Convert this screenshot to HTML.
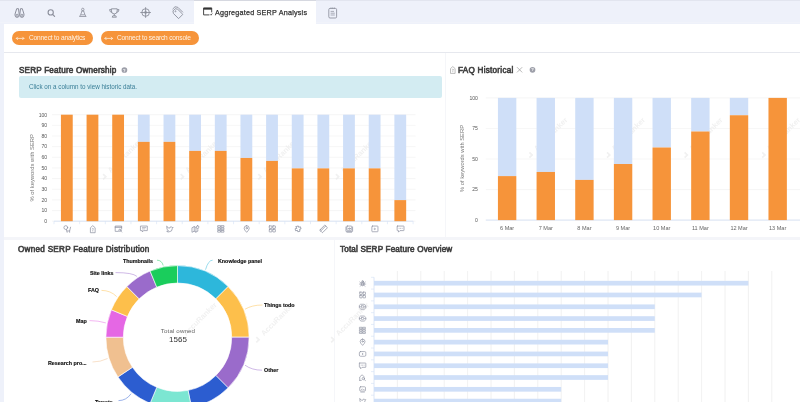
<!DOCTYPE html>
<html><head><meta charset="utf-8"><title>Aggregated SERP Analysis</title>
<style>
html,body{margin:0;padding:0;}
body{width:800px;height:402px;overflow:hidden;background:#eef1fa;font-family:"Liberation Sans",sans-serif;position:relative;}
.abs{position:absolute;white-space:nowrap;line-height:1;will-change:transform;}
#panel{position:absolute;left:4px;top:23.5px;width:796px;height:379px;background:#fff;}
#tab{position:absolute;left:193.6px;top:0px;width:122.6px;height:24px;background:#fff;border-top:1px solid #d6d8e0;box-sizing:border-box;}
.btn{position:absolute;top:31.1px;height:13.7px;border-radius:7px;background:#f6943a;}
.h{font-weight:normal;color:#424242;font-size:8.15px;-webkit-text-stroke:0.6px #424242;}
svg{position:absolute;left:0;top:0;}
.dl{font-size:5.35px;font-weight:bold;color:#111;-webkit-text-stroke:0.15px #111;margin-top:0.4px;}
</style></head><body>
<div style="position:absolute;left:0;top:0;width:800px;height:1px;background:#e2e5ef"></div>
<div style="position:absolute;left:0;top:22.4px;width:800px;height:1.1px;background:#f1f3fa"></div>
<div id="panel"></div>
<div id="tab"></div>
<div style="position:absolute;left:4px;top:52px;width:796px;height:1px;background:#e6e8ee"></div>
<div style="position:absolute;left:4px;top:237px;width:796px;height:2.6px;background:#f4f5f9"></div>
<div style="position:absolute;left:444.6px;top:53px;width:1px;height:184px;background:#f5f6f9"></div>
<div style="position:absolute;left:334.4px;top:240px;width:1px;height:162px;background:#f5f6f9"></div>

<div class="abs" id="tabtxt" style="left:214.6px;top:9.4px;font-size:7.2px;letter-spacing:0.22px;color:#333;-webkit-text-stroke:0.25px #333;">Aggregated SERP Analysis</div>
<div class="btn" style="left:11.9px;width:81.2px;"></div>
<div class="btn" style="left:100.5px;width:98.1px;"></div>
<div class="abs" id="b1" style="left:28.8px;top:35.4px;font-size:6.6px;letter-spacing:-0.16px;color:#fff3e6;">Connect to analytics</div>
<div class="abs" id="b2" style="left:117px;top:35.4px;font-size:6.6px;letter-spacing:-0.176px;color:#fff3e6;">Connect to search console</div>
<div class="abs h" id="h1" style="left:18.7px;top:66.9px;font-size:8.15px;letter-spacing:0.19px">SERP Feature Ownership</div>
<div class="abs h" id="h2" style="left:458px;top:66.9px;font-size:8.15px;letter-spacing:0.26px">FAQ Historical</div>
<div class="abs h" id="h3" style="left:18.4px;top:246.1px;font-size:8.15px;letter-spacing:0.275px">Owned SERP Feature Distribution</div>
<div class="abs h" id="h4" style="left:339.6px;top:246.0px;font-size:8.15px;letter-spacing:0.17px">Total SERP Feature Overview</div>
<div style="position:absolute;left:18.5px;top:76.3px;width:423px;height:21.4px;background:#d3ecf2;border-radius:2px"></div>
<div class="abs" id="info" style="left:28.7px;top:84.1px;font-size:6.28px;color:#3a7f97;">Click on a column to view historic data.</div>
<svg width="800" height="402" viewBox="0 0 800 402">
<g fill="none" stroke="#8b8e9b" stroke-width="1" stroke-linejoin="round"><path d="M16.7 8.7 H18.5 L19.15 14 V15.3 A2.05 2.05 0 0 1 15.05 15.3 V14 Z"/><path d="M22.3 8.7 H20.5 L19.85 14 V15.3 A2.05 2.05 0 0 0 23.95 15.3 V14 Z"/><circle cx="17.1" cy="15.3" r="1.05" stroke-width="0.9"/><circle cx="21.9" cy="15.3" r="1.05" stroke-width="0.9"/></g>
<g fill="none" stroke="#8b8e9b" stroke-width="1.1"><circle cx="50.7" cy="12.4" r="2.6"/><path d="M52.6 14.4 L54.6 16.4" stroke-linecap="round"/></g>
<g fill="none" stroke="#8b8e9b" stroke-width="0.8" stroke-linejoin="round"><circle cx="82.8" cy="9.4" r="1.2"/><path d="M81.4 11 h2.8 M82 11 L80.6 14.8 h4.4 L83.6 11 M79.6 16.4 L80.6 14.8 M86 16.4 L85 14.8 M79.4 16.5 h6.8"/></g>
<g fill="none" stroke="#8b8e9b" stroke-width="0.9" stroke-linejoin="round"><path d="M111.4 8.8 h5.8 v2.2 a2.9 2.9 0 0 1 -5.8 0 Z"/><path d="M111.4 9.6 h-1.8 q0 2.6 2.4 2.8 M117.2 9.6 h1.8 q0 2.6 -2.4 2.8 M114.3 14 v2 M112.2 17.2 l0.6 -1.4 h3 l0.6 1.4 Z"/></g>
<g fill="none" stroke="#8b8e9b" stroke-width="0.9"><circle cx="145.6" cy="12.5" r="3.8"/><path d="M145.6 7.2 V17.8 M140.3 12.5 H150.9"/><circle cx="145.6" cy="12.5" r="1.4" fill="#8b8e9b" stroke="none" opacity="0.8"/></g>
<g fill="none" stroke="#8b8e9b" stroke-width="0.85" stroke-linejoin="round" transform="translate(177.3,13.1) rotate(-45)"><path d="M-1.6 -4.6 L1.6 -4.6 L3 -2.4 V4.8 H-3 V-2.4 Z" transform="rotate(0)"/><path d="M-0.6 -6.1 L2.9 -6.1 L4.5 -3.6 V3.4" /><circle cx="0" cy="-2.6" r="0.5"/></g>
<g fill="none" stroke="#333" stroke-width="0.9" stroke-linejoin="round"><path d="M209.4 14.9 H203.6 V7.9 H211.7 V12.4"/><path d="M203.6 8.8 H211.7" stroke-width="1.7"/><path d="M210.2 14.3 l0.8 0.9 l1.3 -1.7" stroke-width="0.8"/></g>
<g fill="none" stroke="#8b8e9b" stroke-width="0.85"><rect x="328.8" y="8.4" width="7.8" height="9.6" rx="1.2"/><path d="M331 7.4 v1.6 M332.7 7.4 v1.6 M334.4 7.4 v1.6" stroke-width="0.6"/><path d="M330.6 11.4 h3.4 M330.6 13.2 h4.2 M330.6 15 h4.2" stroke-width="0.7"/></g>
<g fill="none" stroke="#fff0e0" stroke-width="0.75" stroke-linecap="round" stroke-linejoin="round"><path d="M16.3 38.4 h7.6 M17.6 37.1 l-1.3 1.3 l1.3 1.3 M22.6 37.1 l1.3 1.3 l-1.3 1.3"/></g>
<g fill="none" stroke="#fff0e0" stroke-width="0.75" stroke-linecap="round" stroke-linejoin="round"><path d="M104.9 38.4 h7.6 M106.2 37.1 l-1.3 1.3 l1.3 1.3 M111.2 37.1 l1.3 1.3 l-1.3 1.3"/></g>
<circle cx="124.4" cy="70.0" r="2.85" fill="#9d9fa9"/><text x="124.4" y="71.5" font-size="4.2" font-weight="bold" fill="#fff" text-anchor="middle">?</text>
<circle cx="532.5" cy="69.8" r="2.85" fill="#9d9fa9"/><text x="532.5" y="71.3" font-size="4.2" font-weight="bold" fill="#fff" text-anchor="middle">?</text>
<g transform="translate(449.12,66.02) scale(0.92)" fill="none" stroke="#999" stroke-width="0.7" stroke-linecap="round" stroke-linejoin="round"><path d="M1.5 7.6 V2.8 L4 0.6 L6.5 2.8 V7.6 Z"/><path d="M3.3 3.8 Q4 3 4.7 3.8 Q4.7 4.6 4 4.9 V5.4 M4 6.2 V6.3" stroke-width="0.6"/></g>
<path d="M517 67.2 L522.2 72.4 M522.2 67.2 L517 72.4" stroke="#8a8a8a" stroke-width="0.6" fill="none"/>
<g fill="#f1f1f1"><path d="M103.7 173.6 l3.4 3.2 l-3.4 3.2 l-1.2 -1.2 l2.1 -2 l-2.1 -2 Z"/><text transform="translate(110.7,173.3) rotate(-45)" font-size="7.5" font-weight="bold">AccuRanker</text></g>
<g fill="#f1f1f1"><path d="M181.3 173.6 l3.4 3.2 l-3.4 3.2 l-1.2 -1.2 l2.1 -2 l-2.1 -2 Z"/><text transform="translate(188.3,173.3) rotate(-45)" font-size="7.5" font-weight="bold">AccuRanker</text></g>
<g fill="#f1f1f1"><path d="M258.9 173.6 l3.4 3.2 l-3.4 3.2 l-1.2 -1.2 l2.1 -2 l-2.1 -2 Z"/><text transform="translate(265.9,173.3) rotate(-45)" font-size="7.5" font-weight="bold">AccuRanker</text></g>
<g fill="#f1f1f1"><path d="M336.5 173.6 l3.4 3.2 l-3.4 3.2 l-1.2 -1.2 l2.1 -2 l-2.1 -2 Z"/><text transform="translate(343.5,173.3) rotate(-45)" font-size="7.5" font-weight="bold">AccuRanker</text></g>
<g fill="#f1f1f1"><path d="M530.0 151.8 l3.4 3.2 l-3.4 3.2 l-1.2 -1.2 l2.1 -2 l-2.1 -2 Z"/><text transform="translate(537.0,151.5) rotate(-45)" font-size="7.5" font-weight="bold">AccuRanker</text></g>
<g fill="#f1f1f1"><path d="M607.6 151.8 l3.4 3.2 l-3.4 3.2 l-1.2 -1.2 l2.1 -2 l-2.1 -2 Z"/><text transform="translate(614.6,151.5) rotate(-45)" font-size="7.5" font-weight="bold">AccuRanker</text></g>
<g fill="#f1f1f1"><path d="M685.2 151.8 l3.4 3.2 l-3.4 3.2 l-1.2 -1.2 l2.1 -2 l-2.1 -2 Z"/><text transform="translate(692.2,151.5) rotate(-45)" font-size="7.5" font-weight="bold">AccuRanker</text></g>
<g fill="#f1f1f1"><path d="M762.8 151.8 l3.4 3.2 l-3.4 3.2 l-1.2 -1.2 l2.1 -2 l-2.1 -2 Z"/><text transform="translate(769.8,151.5) rotate(-45)" font-size="7.5" font-weight="bold">AccuRanker</text></g>
<g fill="#f1f1f1"><path d="M179.3 336.6 l3.4 3.2 l-3.4 3.2 l-1.2 -1.2 l2.1 -2 l-2.1 -2 Z"/><text transform="translate(186.3,336.3) rotate(-45)" font-size="7.5" font-weight="bold">AccuRanker</text></g>
<g fill="#f1f1f1"><path d="M256.9 336.6 l3.4 3.2 l-3.4 3.2 l-1.2 -1.2 l2.1 -2 l-2.1 -2 Z"/><text transform="translate(263.9,336.3) rotate(-45)" font-size="7.5" font-weight="bold">AccuRanker</text></g>
<g fill="#f1f1f1"><path d="M331.8 336.6 l3.4 3.2 l-3.4 3.2 l-1.2 -1.2 l2.1 -2 l-2.1 -2 Z"/><text transform="translate(338.8,336.3) rotate(-45)" font-size="7.5" font-weight="bold">AccuRanker</text></g>
<line x1="52.0" x2="415.5" y1="221.20" y2="221.20" stroke="#ececec" stroke-width="0.5"/>
<text x="47.2" y="223.00" font-size="5.1" fill="#585858" text-anchor="end">0</text>
<line x1="52.0" x2="415.5" y1="210.55" y2="210.55" stroke="#ececec" stroke-width="0.5"/>
<text x="47.2" y="212.35" font-size="5.1" fill="#585858" text-anchor="end">10</text>
<line x1="52.0" x2="415.5" y1="199.90" y2="199.90" stroke="#ececec" stroke-width="0.5"/>
<text x="47.2" y="201.70" font-size="5.1" fill="#585858" text-anchor="end">20</text>
<line x1="52.0" x2="415.5" y1="189.25" y2="189.25" stroke="#ececec" stroke-width="0.5"/>
<text x="47.2" y="191.05" font-size="5.1" fill="#585858" text-anchor="end">30</text>
<line x1="52.0" x2="415.5" y1="178.60" y2="178.60" stroke="#ececec" stroke-width="0.5"/>
<text x="47.2" y="180.40" font-size="5.1" fill="#585858" text-anchor="end">40</text>
<line x1="52.0" x2="415.5" y1="167.95" y2="167.95" stroke="#ececec" stroke-width="0.5"/>
<text x="47.2" y="169.75" font-size="5.1" fill="#585858" text-anchor="end">50</text>
<line x1="52.0" x2="415.5" y1="157.30" y2="157.30" stroke="#ececec" stroke-width="0.5"/>
<text x="47.2" y="159.10" font-size="5.1" fill="#585858" text-anchor="end">60</text>
<line x1="52.0" x2="415.5" y1="146.65" y2="146.65" stroke="#ececec" stroke-width="0.5"/>
<text x="47.2" y="148.45" font-size="5.1" fill="#585858" text-anchor="end">70</text>
<line x1="52.0" x2="415.5" y1="136.00" y2="136.00" stroke="#ececec" stroke-width="0.5"/>
<text x="47.2" y="137.80" font-size="5.1" fill="#585858" text-anchor="end">80</text>
<line x1="52.0" x2="415.5" y1="125.35" y2="125.35" stroke="#ececec" stroke-width="0.5"/>
<text x="47.2" y="127.15" font-size="5.1" fill="#585858" text-anchor="end">90</text>
<line x1="52.0" x2="415.5" y1="114.70" y2="114.70" stroke="#ececec" stroke-width="0.5"/>
<text x="47.2" y="116.50" font-size="5.1" fill="#585858" text-anchor="end">100</text>
<line x1="54.00" x2="54.00" y1="221.2" y2="224.2" stroke="#d3e0f5" stroke-width="0.6"/>
<line x1="79.65" x2="79.65" y1="221.2" y2="224.2" stroke="#d3e0f5" stroke-width="0.6"/>
<line x1="105.30" x2="105.30" y1="221.2" y2="224.2" stroke="#d3e0f5" stroke-width="0.6"/>
<line x1="130.95" x2="130.95" y1="221.2" y2="224.2" stroke="#d3e0f5" stroke-width="0.6"/>
<line x1="156.60" x2="156.60" y1="221.2" y2="224.2" stroke="#d3e0f5" stroke-width="0.6"/>
<line x1="182.25" x2="182.25" y1="221.2" y2="224.2" stroke="#d3e0f5" stroke-width="0.6"/>
<line x1="207.90" x2="207.90" y1="221.2" y2="224.2" stroke="#d3e0f5" stroke-width="0.6"/>
<line x1="233.55" x2="233.55" y1="221.2" y2="224.2" stroke="#d3e0f5" stroke-width="0.6"/>
<line x1="259.20" x2="259.20" y1="221.2" y2="224.2" stroke="#d3e0f5" stroke-width="0.6"/>
<line x1="284.85" x2="284.85" y1="221.2" y2="224.2" stroke="#d3e0f5" stroke-width="0.6"/>
<line x1="310.50" x2="310.50" y1="221.2" y2="224.2" stroke="#d3e0f5" stroke-width="0.6"/>
<line x1="336.15" x2="336.15" y1="221.2" y2="224.2" stroke="#d3e0f5" stroke-width="0.6"/>
<line x1="361.80" x2="361.80" y1="221.2" y2="224.2" stroke="#d3e0f5" stroke-width="0.6"/>
<line x1="387.45" x2="387.45" y1="221.2" y2="224.2" stroke="#d3e0f5" stroke-width="0.6"/>
<line x1="413.10" x2="413.10" y1="221.2" y2="224.2" stroke="#d3e0f5" stroke-width="0.6"/>
<line x1="54.0" x2="413.1" y1="221.2" y2="221.2" stroke="#d3e0f5" stroke-width="0.8"/>
<rect x="60.93" y="114.70" width="11.8" height="106.50" fill="#f6943a"/>
<g transform="translate(63.33,225.10) scale(0.95)" fill="none" stroke="#8c90a0" stroke-width="0.75" stroke-linecap="round" stroke-linejoin="round"><circle cx="2.6" cy="2.6" r="2"/><path d="M3.2 4.6 L4 7.6 M4 6.2 H6.6 L7.6 2.2 M6.6 6.2 V7.6"/></g>
<rect x="86.57" y="114.70" width="11.8" height="106.50" fill="#f6943a"/>
<g transform="translate(88.97,225.10) scale(0.95)" fill="none" stroke="#8c90a0" stroke-width="0.75" stroke-linecap="round" stroke-linejoin="round"><path d="M1.5 7.6 V2.8 L4 0.6 L6.5 2.8 V7.6 Z"/><path d="M3.3 3.8 Q4 3 4.7 3.8 Q4.7 4.6 4 4.9 V5.4 M4 6.2 V6.3" stroke-width="0.6"/></g>
<rect x="112.22" y="114.70" width="11.8" height="106.50" fill="#f6943a"/>
<g transform="translate(114.62,225.10) scale(0.95)" fill="none" stroke="#8c90a0" stroke-width="0.75" stroke-linecap="round" stroke-linejoin="round"><path d="M4 6.6 H0.6 V1 H7.4 V4"/><path d="M0.6 2.2 H7.4" stroke-width="1"/><circle cx="5.6" cy="5.4" r="1.2"/><path d="M6.5 6.3 L7.5 7.3"/></g>
<rect x="137.87" y="114.7" width="11.8" height="27.16" fill="#cfdff8"/>
<rect x="137.87" y="141.86" width="11.8" height="79.34" fill="#f6943a"/>
<g transform="translate(140.27,225.10) scale(0.95)" fill="none" stroke="#8c90a0" stroke-width="0.75" stroke-linecap="round" stroke-linejoin="round"><path d="M0.6 1 H7.4 V5.8 H3.4 L2.2 7.2 V5.8 H0.6 Z"/><path d="M2.2 2.6 H5.8 M2.2 4 H4.8" stroke-width="0.6"/></g>
<rect x="163.53" y="114.7" width="11.8" height="27.16" fill="#cfdff8"/>
<rect x="163.53" y="141.86" width="11.8" height="79.34" fill="#f6943a"/>
<g transform="translate(165.93,225.10) scale(0.95)" fill="none" stroke="#8c90a0" stroke-width="0.75" stroke-linecap="round" stroke-linejoin="round"><path d="M1 1.6 Q2.4 3.4 4 3.2 Q4 1.6 5.6 1.8 Q6.4 2 6.6 2.6 L7.6 2.4 L6.8 3.4 Q6.8 7 3 7.2 Q1.8 7.2 0.8 6.6 Q2.2 6.6 2.8 6 Q1.4 5.6 1.4 4.6 Q0.6 3.2 1 1.6 Z"/></g>
<rect x="189.17" y="114.7" width="11.8" height="36.21" fill="#cfdff8"/>
<rect x="189.17" y="150.91" width="11.8" height="70.29" fill="#f6943a"/>
<g transform="translate(191.57,225.10) scale(0.95)" fill="none" stroke="#8c90a0" stroke-width="0.75" stroke-linecap="round" stroke-linejoin="round"><path d="M0.8 2.6 L2.8 1.6 L4.6 2.6 V7.4 L2.8 6.4 L0.8 7.4 Z M2.8 1.6 V6.4 M4.6 7.4 L6.6 6.4 V4.8"/><path d="M6.4 0.6 A1.3 1.3 0 0 1 7.7 1.9 Q7.7 2.8 6.4 4.2 Q5.1 2.8 5.1 1.9 A1.3 1.3 0 0 1 6.4 0.6 Z"/></g>
<rect x="214.82" y="114.7" width="11.8" height="36.21" fill="#cfdff8"/>
<rect x="214.82" y="150.91" width="11.8" height="70.29" fill="#f6943a"/>
<g transform="translate(217.22,225.10) scale(0.95)" fill="none" stroke="#8c90a0" stroke-width="0.75" stroke-linecap="round" stroke-linejoin="round"><rect x="0.9" y="0.6" width="2.6" height="1.7"/><rect x="4.5" y="0.6" width="2.6" height="1.7"/><rect x="0.9" y="3.15" width="2.6" height="1.7"/><rect x="4.5" y="3.15" width="2.6" height="1.7"/><rect x="0.9" y="5.7" width="2.6" height="1.7"/><rect x="4.5" y="5.7" width="2.6" height="1.7"/></g>
<rect x="240.47" y="114.7" width="11.8" height="43.24" fill="#cfdff8"/>
<rect x="240.47" y="157.94" width="11.8" height="63.26" fill="#f6943a"/>
<g transform="translate(242.88,225.10) scale(0.95)" fill="none" stroke="#8c90a0" stroke-width="0.75" stroke-linecap="round" stroke-linejoin="round"><path d="M4 0.6 A2.7 2.7 0 0 1 6.7 3.3 Q6.7 5 4 7.6 Q1.3 5 1.3 3.3 A2.7 2.7 0 0 1 4 0.6 Z"/><circle cx="4" cy="3.2" r="0.8"/></g>
<rect x="266.12" y="114.7" width="11.8" height="46.22" fill="#cfdff8"/>
<rect x="266.12" y="160.92" width="11.8" height="60.28" fill="#f6943a"/>
<g transform="translate(268.52,225.10) scale(0.95)" fill="none" stroke="#8c90a0" stroke-width="0.75" stroke-linecap="round" stroke-linejoin="round"><rect x="0.8" y="0.8" width="2.7" height="2.7" rx="0.3"/><rect x="4.5" y="0.8" width="2.7" height="2.7" rx="0.3"/><rect x="0.8" y="4.5" width="2.7" height="2.7" rx="0.3"/><rect x="4.5" y="4.5" width="2.7" height="2.7" rx="0.3"/></g>
<rect x="291.77" y="114.7" width="11.8" height="53.68" fill="#cfdff8"/>
<rect x="291.77" y="168.38" width="11.8" height="52.82" fill="#f6943a"/>
<g transform="translate(294.17,225.10) scale(0.95)" fill="none" stroke="#8c90a0" stroke-width="0.75" stroke-linecap="round" stroke-linejoin="round"><path d="M3 1 L5.4 1.2 L5.2 2.6 L7.2 2.8 L7 5.2 L5.4 5 L5.2 7 L2.8 6.8 L3 5.2 L1 5 L1.2 2.8 L2.8 3 Z" transform="rotate(-20 4 4)"/></g>
<rect x="317.43" y="114.7" width="11.8" height="53.68" fill="#cfdff8"/>
<rect x="317.43" y="168.38" width="11.8" height="52.82" fill="#f6943a"/>
<g transform="translate(319.82,225.10) scale(0.95)" fill="none" stroke="#8c90a0" stroke-width="0.75" stroke-linecap="round" stroke-linejoin="round"><g transform="rotate(-45 4 4)"><rect x="0.2" y="2" width="7.6" height="4" rx="0.6"/><path d="M0.2 3.4 H7.8" /></g></g>
<rect x="343.07" y="114.7" width="11.8" height="53.68" fill="#cfdff8"/>
<rect x="343.07" y="168.38" width="11.8" height="52.82" fill="#f6943a"/>
<g transform="translate(345.47,225.10) scale(0.95)" fill="none" stroke="#8c90a0" stroke-width="0.75" stroke-linecap="round" stroke-linejoin="round"><rect x="1.4" y="1" width="5.2" height="4.4" rx="0.5"/><path d="M0.5 2 V6.6 H7.5 V2 M2.8 3.6 H5.2 M4.4 2.8 L5.2 3.6 L4.4 4.4 M1.5 7.5 H6.5"/></g>
<rect x="368.73" y="114.7" width="11.8" height="53.68" fill="#cfdff8"/>
<rect x="368.73" y="168.38" width="11.8" height="52.82" fill="#f6943a"/>
<g transform="translate(371.12,225.10) scale(0.95)" fill="none" stroke="#8c90a0" stroke-width="0.75" stroke-linecap="round" stroke-linejoin="round"><rect x="0.8" y="1" width="6.4" height="6" rx="0.6"/><path d="M3.6 3.2 L4.8 4 L3.6 4.8 Z" fill="#8c90a0" stroke-width="0.4"/></g>
<rect x="394.38" y="114.7" width="11.8" height="85.41" fill="#cfdff8"/>
<rect x="394.38" y="200.11" width="11.8" height="21.09" fill="#f6943a"/>
<g transform="translate(396.77,225.10) scale(0.95)" fill="none" stroke="#8c90a0" stroke-width="0.75" stroke-linecap="round" stroke-linejoin="round"><path d="M0.8 1 H7.2 Q7.6 1 7.6 1.4 V5.4 Q7.6 5.8 7.2 5.8 H3.4 L1.8 7.4 V5.8 H0.8 Q0.4 5.8 0.4 5.4 V1.4 Q0.4 1 0.8 1 Z"/><path d="M2.4 3.4 H2.5 M4 3.4 H4.1 M5.6 3.4 H5.7" stroke-width="0.7"/></g>
<text transform="translate(33.6,167.8) rotate(-90)" font-size="5.85" fill="#777" text-anchor="middle">% of keywords with SERP</text>
<line x1="485.8" x2="800" y1="220.10" y2="220.10" stroke="#ececec" stroke-width="0.5"/>
<text x="477.9" y="221.90" font-size="5.1" fill="#585858" text-anchor="end">0</text>
<line x1="485.8" x2="800" y1="189.55" y2="189.55" stroke="#ececec" stroke-width="0.5"/>
<text x="477.9" y="191.35" font-size="5.1" fill="#585858" text-anchor="end">25</text>
<line x1="485.8" x2="800" y1="159.00" y2="159.00" stroke="#ececec" stroke-width="0.5"/>
<text x="477.9" y="160.80" font-size="5.1" fill="#585858" text-anchor="end">50</text>
<line x1="485.8" x2="800" y1="128.45" y2="128.45" stroke="#ececec" stroke-width="0.5"/>
<text x="477.9" y="130.25" font-size="5.1" fill="#585858" text-anchor="end">75</text>
<line x1="485.8" x2="800" y1="97.90" y2="97.90" stroke="#ececec" stroke-width="0.5"/>
<text x="477.9" y="99.70" font-size="5.1" fill="#585858" text-anchor="end">100</text>
<line x1="485.8" x2="800" y1="220.1" y2="220.1" stroke="#d3e0f5" stroke-width="0.8"/>
<rect x="497.93" y="97.9" width="18.4" height="78.21" fill="#cfdff8"/>
<rect x="497.93" y="176.11" width="18.4" height="43.99" fill="#f6943a"/>
<text x="507.12" y="229.7" font-size="5.55" fill="#666" text-anchor="middle">6 Mar</text>
<rect x="536.57" y="97.9" width="18.4" height="74.05" fill="#cfdff8"/>
<rect x="536.57" y="171.95" width="18.4" height="48.15" fill="#f6943a"/>
<text x="545.77" y="229.7" font-size="5.55" fill="#666" text-anchor="middle">7 Mar</text>
<rect x="575.22" y="97.9" width="18.4" height="82.00" fill="#cfdff8"/>
<rect x="575.22" y="179.90" width="18.4" height="40.20" fill="#f6943a"/>
<text x="584.42" y="229.7" font-size="5.55" fill="#666" text-anchor="middle">8 Mar</text>
<rect x="613.88" y="97.9" width="18.4" height="66.11" fill="#cfdff8"/>
<rect x="613.88" y="164.01" width="18.4" height="56.09" fill="#f6943a"/>
<text x="623.08" y="229.7" font-size="5.55" fill="#666" text-anchor="middle">9 Mar</text>
<rect x="652.52" y="97.9" width="18.4" height="49.61" fill="#cfdff8"/>
<rect x="652.52" y="147.51" width="18.4" height="72.59" fill="#f6943a"/>
<text x="661.73" y="229.7" font-size="5.55" fill="#666" text-anchor="middle">10 Mar</text>
<rect x="691.17" y="97.9" width="18.4" height="33.60" fill="#cfdff8"/>
<rect x="691.17" y="131.50" width="18.4" height="88.59" fill="#f6943a"/>
<text x="700.38" y="229.7" font-size="5.55" fill="#666" text-anchor="middle">11 Mar</text>
<rect x="729.82" y="97.9" width="18.4" height="17.35" fill="#cfdff8"/>
<rect x="729.82" y="115.25" width="18.4" height="104.85" fill="#f6943a"/>
<text x="739.02" y="229.7" font-size="5.55" fill="#666" text-anchor="middle">12 Mar</text>
<rect x="768.47" y="97.90" width="18.4" height="122.20" fill="#f6943a"/>
<text x="777.67" y="229.7" font-size="5.55" fill="#666" text-anchor="middle">13 Mar</text>
<text transform="translate(463.9,158.5) rotate(-90)" font-size="5.8" fill="#777" text-anchor="middle">% of keywords with SERP</text>
<path d="M177.50,265.60 A71.6,71.6 0 0 1 228.13,286.57 L215.83,298.87 A54.2,54.2 0 0 0 177.50,283.00 Z" fill="#2db7db" stroke="#fff" stroke-width="0.6"/>
<path d="M228.13,286.57 A71.6,71.6 0 0 1 249.10,337.20 L231.70,337.20 A54.2,54.2 0 0 0 215.83,298.87 Z" fill="#fdbf4b" stroke="#fff" stroke-width="0.6"/>
<path d="M249.10,337.20 A71.6,71.6 0 0 1 228.13,387.83 L215.83,375.53 A54.2,54.2 0 0 0 231.70,337.20 Z" fill="#9a6bcb" stroke="#fff" stroke-width="0.6"/>
<path d="M228.13,387.83 A71.6,71.6 0 0 1 191.47,407.42 L188.07,390.36 A54.2,54.2 0 0 0 215.83,375.53 Z" fill="#2c5dd0" stroke="#fff" stroke-width="0.6"/>
<path d="M191.47,407.42 A71.6,71.6 0 0 1 150.10,403.35 L156.76,387.27 A54.2,54.2 0 0 0 188.07,390.36 Z" fill="#7ce6d2" stroke="#fff" stroke-width="0.6"/>
<path d="M150.10,403.35 A71.6,71.6 0 0 1 117.97,376.98 L132.43,367.31 A54.2,54.2 0 0 0 156.76,387.27 Z" fill="#2c5dd0" stroke="#fff" stroke-width="0.6"/>
<path d="M117.97,376.98 A71.6,71.6 0 0 1 105.90,337.20 L123.30,337.20 A54.2,54.2 0 0 0 132.43,367.31 Z" fill="#f0c090" stroke="#fff" stroke-width="0.6"/>
<path d="M105.90,337.20 A71.6,71.6 0 0 1 111.35,309.80 L127.43,316.46 A54.2,54.2 0 0 0 123.30,337.20 Z" fill="#e567e4" stroke="#fff" stroke-width="0.6"/>
<path d="M111.35,309.80 A71.6,71.6 0 0 1 126.87,286.57 L139.17,298.87 A54.2,54.2 0 0 0 127.43,316.46 Z" fill="#fdbf4b" stroke="#fff" stroke-width="0.6"/>
<path d="M126.87,286.57 A71.6,71.6 0 0 1 150.10,271.05 L156.76,287.13 A54.2,54.2 0 0 0 139.17,298.87 Z" fill="#9a6bcb" stroke="#fff" stroke-width="0.6"/>
<path d="M150.10,271.05 A71.6,71.6 0 0 1 177.50,265.60 L177.50,283.00 A54.2,54.2 0 0 0 156.76,287.13 Z" fill="#1acd5c" stroke="#fff" stroke-width="0.6"/>
<path d="M212.6,260.2 Q208.3,260.2 205.5,269.7" fill="none" stroke="#2db7db" stroke-width="0.6" opacity="0.8"/>
<path d="M262.5,305.0 Q252.0,305.0 245.0,309.2" fill="none" stroke="#fdbf4b" stroke-width="0.6" opacity="0.8"/>
<path d="M262.0,370.2 Q252.0,370.2 245.0,365.2" fill="none" stroke="#9a6bcb" stroke-width="0.6" opacity="0.8"/>
<path d="M157.0,260.2 Q161.8,260.2 163.2,265.5" fill="none" stroke="#1acd5c" stroke-width="0.6" opacity="0.8"/>
<path d="M115.5,272.6 Q132.7,272.6 136.9,276.4" fill="none" stroke="#9a6bcb" stroke-width="0.6" opacity="0.8"/>
<path d="M101.5,290.4 Q110.5,290.4 116.7,296.6" fill="none" stroke="#fdbf4b" stroke-width="0.6" opacity="0.8"/>
<path d="M89.5,320.6 Q98.4,320.6 105.8,322.9" fill="none" stroke="#e567e4" stroke-width="0.6" opacity="0.8"/>
<path d="M92.5,362.0 Q100.4,362.0 107.6,358.5" fill="none" stroke="#f0c090" stroke-width="0.6" opacity="0.8"/>
<path d="M118.5,400.6 Q126.3,400.6 131.1,393.7" fill="none" stroke="#2c5dd0" stroke-width="0.6" opacity="0.8"/>
<line x1="397.40" x2="397.40" y1="271" y2="402" stroke="#e6e6e6" stroke-width="0.55"/>
<line x1="420.80" x2="420.80" y1="271" y2="402" stroke="#e6e6e6" stroke-width="0.55"/>
<line x1="444.20" x2="444.20" y1="271" y2="402" stroke="#e6e6e6" stroke-width="0.55"/>
<line x1="467.60" x2="467.60" y1="271" y2="402" stroke="#e6e6e6" stroke-width="0.55"/>
<line x1="491.00" x2="491.00" y1="271" y2="402" stroke="#e6e6e6" stroke-width="0.55"/>
<line x1="514.40" x2="514.40" y1="271" y2="402" stroke="#e6e6e6" stroke-width="0.55"/>
<line x1="537.80" x2="537.80" y1="271" y2="402" stroke="#e6e6e6" stroke-width="0.55"/>
<line x1="561.20" x2="561.20" y1="271" y2="402" stroke="#e6e6e6" stroke-width="0.55"/>
<line x1="584.60" x2="584.60" y1="271" y2="402" stroke="#e6e6e6" stroke-width="0.55"/>
<line x1="608.00" x2="608.00" y1="271" y2="402" stroke="#e6e6e6" stroke-width="0.55"/>
<line x1="631.40" x2="631.40" y1="271" y2="402" stroke="#e6e6e6" stroke-width="0.55"/>
<line x1="654.80" x2="654.80" y1="271" y2="402" stroke="#e6e6e6" stroke-width="0.55"/>
<line x1="678.20" x2="678.20" y1="271" y2="402" stroke="#e6e6e6" stroke-width="0.55"/>
<line x1="701.60" x2="701.60" y1="271" y2="402" stroke="#e6e6e6" stroke-width="0.55"/>
<line x1="725.00" x2="725.00" y1="271" y2="402" stroke="#e6e6e6" stroke-width="0.55"/>
<line x1="748.40" x2="748.40" y1="271" y2="402" stroke="#e6e6e6" stroke-width="0.55"/>
<line x1="771.80" x2="771.80" y1="271" y2="402" stroke="#e6e6e6" stroke-width="0.55"/>
<line x1="374" x2="374" y1="277.3" y2="402" stroke="#d3e0f5" stroke-width="0.8"/>
<rect x="374" y="280.84" width="374.40" height="4.7" fill="#cfdff8"/>
<line x1="371" x2="374" y1="277.30" y2="277.30" stroke="#d3e0f5" stroke-width="0.6"/>
<g transform="translate(359.00,279.59) scale(0.9)" fill="none" stroke="#8c90a0" stroke-width="0.75" stroke-linecap="round" stroke-linejoin="round"><ellipse cx="4" cy="4.8" rx="1.7" ry="2.1" fill="#8c90a0" fill-opacity="0.55"/><circle cx="4" cy="2" r="0.9"/><path d="M2.3 3.8 L0.8 2.6 M5.7 3.8 L7.2 2.6 M2.3 5 H0.5 M5.7 5 H7.5 M2.6 6.2 L1.2 7.4 M5.4 6.2 L6.8 7.4" stroke-width="0.6"/></g>
<rect x="374" y="292.63" width="327.60" height="4.7" fill="#cfdff8"/>
<line x1="371" x2="374" y1="289.09" y2="289.09" stroke="#d3e0f5" stroke-width="0.6"/>
<g transform="translate(359.00,291.38) scale(0.9)" fill="none" stroke="#8c90a0" stroke-width="0.75" stroke-linecap="round" stroke-linejoin="round"><rect x="0.8" y="0.8" width="2.7" height="2.7" rx="0.3"/><rect x="4.5" y="0.8" width="2.7" height="2.7" rx="0.3"/><rect x="0.8" y="4.5" width="2.7" height="2.7" rx="0.3"/><rect x="4.5" y="4.5" width="2.7" height="2.7" rx="0.3"/></g>
<rect x="374" y="304.43" width="280.80" height="4.7" fill="#cfdff8"/>
<line x1="371" x2="374" y1="300.88" y2="300.88" stroke="#d3e0f5" stroke-width="0.6"/>
<g transform="translate(359.00,303.18) scale(0.9)" fill="none" stroke="#8c90a0" stroke-width="0.75" stroke-linecap="round" stroke-linejoin="round"><path d="M2.2 1.2 H5.8 L7.6 2.8 V5.2 L5.8 6.8 H2.2 L0.4 5.2 V2.8 Z"/><rect x="2.6" y="2.8" width="2.8" height="2.4" rx="0.5" stroke-width="0.6"/><path d="M0.4 4 H2.6 M5.4 4 H7.6" stroke-width="0.6"/></g>
<rect x="374" y="316.21" width="280.80" height="4.7" fill="#cfdff8"/>
<line x1="371" x2="374" y1="312.67" y2="312.67" stroke="#d3e0f5" stroke-width="0.6"/>
<g transform="translate(359.00,314.96) scale(0.9)" fill="none" stroke="#8c90a0" stroke-width="0.75" stroke-linecap="round" stroke-linejoin="round"><path d="M2.2 1.2 H5.8 L7.6 2.8 V5.2 L5.8 6.8 H2.2 L0.4 5.2 V2.8 Z"/><rect x="2.6" y="2.8" width="2.8" height="2.4" rx="0.5" stroke-width="0.6"/><path d="M0.4 4 H2.6 M5.4 4 H7.6" stroke-width="0.6"/></g>
<rect x="374" y="328.00" width="280.80" height="4.7" fill="#cfdff8"/>
<line x1="371" x2="374" y1="324.46" y2="324.46" stroke="#d3e0f5" stroke-width="0.6"/>
<g transform="translate(359.00,326.75) scale(0.9)" fill="none" stroke="#8c90a0" stroke-width="0.75" stroke-linecap="round" stroke-linejoin="round"><rect x="0.9" y="0.6" width="2.6" height="1.7"/><rect x="4.5" y="0.6" width="2.6" height="1.7"/><rect x="0.9" y="3.15" width="2.6" height="1.7"/><rect x="4.5" y="3.15" width="2.6" height="1.7"/><rect x="0.9" y="5.7" width="2.6" height="1.7"/><rect x="4.5" y="5.7" width="2.6" height="1.7"/></g>
<rect x="374" y="339.79" width="234.00" height="4.7" fill="#cfdff8"/>
<line x1="371" x2="374" y1="336.25" y2="336.25" stroke="#d3e0f5" stroke-width="0.6"/>
<g transform="translate(359.00,338.54) scale(0.9)" fill="none" stroke="#8c90a0" stroke-width="0.75" stroke-linecap="round" stroke-linejoin="round"><path d="M4 0.6 A2.7 2.7 0 0 1 6.7 3.3 Q6.7 5 4 7.6 Q1.3 5 1.3 3.3 A2.7 2.7 0 0 1 4 0.6 Z"/><circle cx="4" cy="3.2" r="0.8"/></g>
<rect x="374" y="351.58" width="234.00" height="4.7" fill="#cfdff8"/>
<line x1="371" x2="374" y1="348.04" y2="348.04" stroke="#d3e0f5" stroke-width="0.6"/>
<g transform="translate(359.00,350.33) scale(0.9)" fill="none" stroke="#8c90a0" stroke-width="0.75" stroke-linecap="round" stroke-linejoin="round"><rect x="0.4" y="1.4" width="7.2" height="5.2" rx="1.3"/><circle cx="4" cy="4" r="0.8" fill="#8c90a0" stroke="none"/></g>
<rect x="374" y="363.38" width="234.00" height="4.7" fill="#cfdff8"/>
<line x1="371" x2="374" y1="359.83" y2="359.83" stroke="#d3e0f5" stroke-width="0.6"/>
<g transform="translate(359.00,362.12) scale(0.9)" fill="none" stroke="#8c90a0" stroke-width="0.75" stroke-linecap="round" stroke-linejoin="round"><path d="M0.8 1 H7.2 Q7.6 1 7.6 1.4 V5.4 Q7.6 5.8 7.2 5.8 H3.4 L1.8 7.4 V5.8 H0.8 Q0.4 5.8 0.4 5.4 V1.4 Q0.4 1 0.8 1 Z"/><path d="M2.4 3.4 H2.5 M4 3.4 H4.1 M5.6 3.4 H5.7" stroke-width="0.7"/></g>
<rect x="374" y="375.16" width="234.00" height="4.7" fill="#cfdff8"/>
<line x1="371" x2="374" y1="371.62" y2="371.62" stroke="#d3e0f5" stroke-width="0.6"/>
<g transform="translate(359.00,373.91) scale(0.9)" fill="none" stroke="#8c90a0" stroke-width="0.75" stroke-linecap="round" stroke-linejoin="round"><path d="M0.8 7.2 V3.4 L3.4 1 L6 3.4 M0.8 7.2 H2.6"/><circle cx="4.8" cy="5.2" r="1.3"/><path d="M5.8 6.2 L7.2 7.4"/></g>
<rect x="374" y="386.95" width="187.20" height="4.7" fill="#cfdff8"/>
<line x1="371" x2="374" y1="383.41" y2="383.41" stroke="#d3e0f5" stroke-width="0.6"/>
<g transform="translate(359.00,385.70) scale(0.9)" fill="none" stroke="#8c90a0" stroke-width="0.75" stroke-linecap="round" stroke-linejoin="round"><rect x="0.8" y="1.2" width="6.4" height="4.8" rx="1"/><path d="M2 7.2 H6 M2.2 4.8 L3.6 3.4 L4.6 4.4 L5.2 3.8 L6 4.8" stroke-width="0.6"/></g>
<rect x="374" y="398.75" width="187.20" height="4.7" fill="#cfdff8"/>
<line x1="371" x2="374" y1="395.20" y2="395.20" stroke="#d3e0f5" stroke-width="0.6"/>
<g transform="translate(359.00,397.50) scale(0.9)" fill="none" stroke="#8c90a0" stroke-width="0.75" stroke-linecap="round" stroke-linejoin="round"><path d="M1 1.6 Q2.4 3.4 4 3.2 Q4 1.6 5.6 1.8 Q6.4 2 6.6 2.6 L7.6 2.4 L6.8 3.4 Q6.8 7 3 7.2 Q1.8 7.2 0.8 6.6 Q2.2 6.6 2.8 6 Q1.4 5.6 1.4 4.6 Q0.6 3.2 1 1.6 Z"/></g>
</svg>
<div class="abs dl" id="l1" style="left:217.8px;top:258.6px;">Knowledge panel</div>
<div class="abs dl" id="l2" style="left:264.3px;top:302.4px;">Things todo</div>
<div class="abs dl" id="l3" style="left:264.3px;top:368px;">Other</div>
<div class="abs dl" id="l4" style="right:647px;top:258.6px;">Thumbnails</div>
<div class="abs dl" id="l5" style="right:687px;top:270.4px;">Site links</div>
<div class="abs dl" id="l6" style="right:701px;top:288px;">FAQ</div>
<div class="abs dl" id="l7" style="right:713.7px;top:318.5px;">Map</div>
<div class="abs dl" id="l8" style="right:713.7px;top:360.2px;">Research pro...</div>
<div class="abs dl" id="l9" style="right:687px;top:399.4px;">Tweets</div>
<div class="abs" id="to" style="left:127.5px;width:100px;text-align:center;top:328.3px;font-size:6.2px;letter-spacing:0.12px;color:#666;">Total owned</div>
<div class="abs" id="tn" style="left:127.5px;width:100px;text-align:center;top:335.8px;font-size:8px;color:#333;">1565</div>
</body></html>
